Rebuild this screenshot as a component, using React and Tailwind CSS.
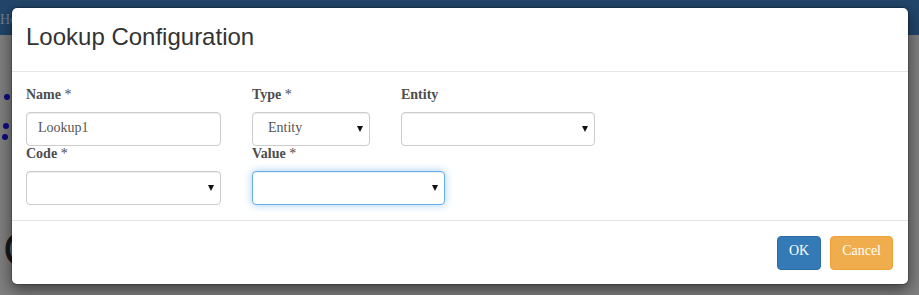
import React from "react"

const serif = "font-['Liberation_Serif',serif]"

// Small native-looking select arrow
const Arrow = () => (
	<svg className="absolute right-[6px] top-1/2 -translate-y-1/2" width="6" height="6" viewBox="0 0 6 6">
		<polygon points="0,0 6,0 3,6" fill="#111" />
	</svg>
)

const Label = ({ text, required }) => (
	<div className={`h-[25px] pt-[1px] text-[14px] leading-[14px] font-bold text-[#4d4d4d] ${serif}`}>
		{text}
		{required && <span className="font-normal"> *</span>}
	</div>
)

const Input = ({ value, width }) => (
	<div
		className={`h-[34px] rounded-[4px] border border-[#cccccc] bg-white px-[11px] pt-[5px] text-[14px] leading-[20px] text-[#555] shadow-[inset_0_1px_1px_rgba(0,0,0,0.075)] ${serif} ${width}`}
	>
		{value}
	</div>
)

const Select = ({ value, width, focused }) => (
	<div
		className={`relative h-[34px] rounded-[4px] border bg-white pl-[15px] pt-[5px] text-[14px] leading-[20px] text-[#555] ${serif} ${width} ${
			focused
				? "border-[#66afe9] shadow-[inset_0_1px_1px_rgba(0,0,0,0.075),0_0_8px_rgba(102,175,233,0.6)]"
				: "border-[#cccccc] shadow-[inset_0_1px_1px_rgba(0,0,0,0.075)]"
		}`}
	>
		{value}
		<Arrow />
	</div>
)

const Field = ({ label, required, children }) => (
	<div className="flex flex-col">
		<Label text={label} required={required} />
		{children}
	</div>
)

const Modal = () => (
	<div className="flex h-[278px] w-[898px] flex-col rounded-[6px] border border-black/20 bg-white shadow-[0_5px_15px_rgba(0,0,0,0.5)] bg-clip-padding">
		{/* Header */}
		<div className="border-b border-[#e5e5e5] px-[14px] pt-[16px] pb-[21px]">
			<h4 className="text-[24px] leading-[26px] text-[#333] font-['Liberation_Sans',Arial,sans-serif]">
				Lookup Configuration
			</h4>
		</div>

		{/* Body */}
		<div className="flex flex-col px-[14px] py-[15px]">
			<div className="flex gap-[31px]">
				<Field label="Name" required>
					<Input value="Lookup1" width="w-[195px]" />
				</Field>
				<Field label="Type" required>
					<Select value="Entity" width="w-[118px]" />
				</Field>
				<Field label="Entity">
					<Select width="w-[194px]" />
				</Field>
			</div>
			<div className="flex gap-[31px]">
				<Field label="Code" required>
					<Select width="w-[195px]" />
				</Field>
				<Field label="Value" required>
					<Select width="w-[193px]" focused />
				</Field>
			</div>
		</div>

		{/* Footer */}
		<div className="flex justify-end gap-[9px] border-t border-[#e5e5e5] px-[15px] py-[15px]">
			<button className={`h-[34px] rounded-[4px] border border-[#2e6da4] bg-[#337ab7] px-[11px] pt-[1px] pb-[5px] text-[14px] leading-[20px] text-white ${serif}`}>
				OK
			</button>
			<button className={`h-[34px] rounded-[4px] border border-[#eea236] bg-[#f0ad4e] px-[11px] pt-[1px] pb-[5px] text-[14px] leading-[20px] text-white ${serif}`}>
				Cancel
			</button>
		</div>
	</div>
)

const App = () => (
	<div className="relative h-[295px] w-[919px] overflow-hidden bg-[#7f7f7f]">
		{/* Dimmed page behind the dialog */}
		<div className="h-[35px] bg-[#22466a] pl-[0px] pt-[6px]">
			<span className="text-[14px] text-[#6f8197] font-['Liberation_Serif',serif]">Ho</span>
		</div>
		<div className="absolute left-[4px] top-[94px] h-[6px] w-[6px] rounded-full bg-[#0d0d80]" />
		<div className="absolute left-[3px] top-[123px] h-[6px] w-[6px] rounded-full bg-[#0d0d80]" />
		<div className="absolute left-[2px] top-[134px] h-[6px] w-[6px] rounded-full bg-[#0d0d80]" />
		<div className="absolute left-[3px] top-[214px] text-[48px] text-[#1a1a1a] font-['Liberation_Sans',sans-serif]">C</div>

		{/* Backdrop + dialog */}
		<div className="absolute inset-0 pl-[11px] pt-[7px]">
			<Modal />
		</div>
	</div>
)

export default App
